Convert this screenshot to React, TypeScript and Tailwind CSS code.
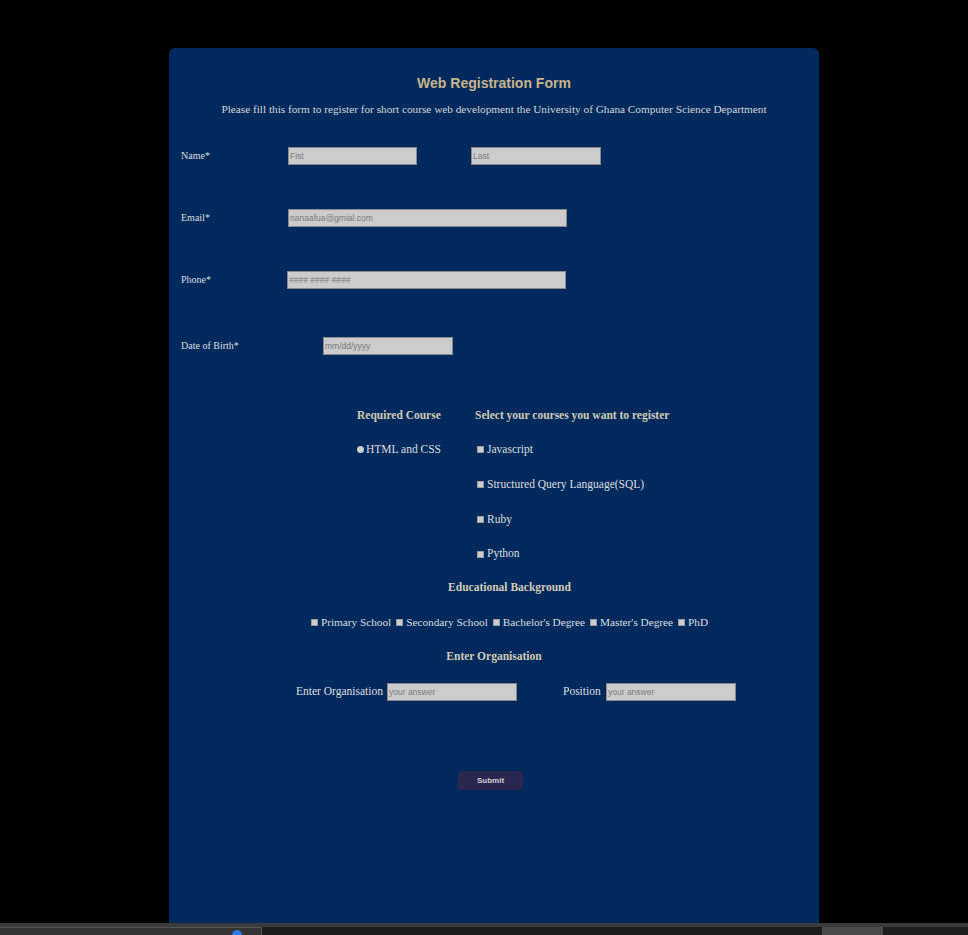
const serif = "font-['Liberation_Serif','Times_New_Roman',serif]";
const sans = "font-['Liberation_Sans',Arial,sans-serif]";

const Field = ({ placeholder, width }: { placeholder: string; width: string }) => (
  <input
    type="text"
    placeholder={placeholder}
    className={`${sans} ${width} h-[18px] border border-[#8a8a8a] bg-[#cccccc] px-[1px] text-[8.5px] text-[#333] outline-none placeholder:text-[#7a7a7a]`}
  />
);

const Box = () => (
  <span className="inline-block h-[7px] w-[7px] shrink-0 border border-[#9c9c9c] bg-[#cdcdcd]" />
);

const CheckItem = ({ label }: { label: string }) => (
  <span className="flex items-center gap-[3px]">
    <Box />
    {label}
  </span>
);

const courses = ["Javascript", "Structured Query Language(SQL)", "Ruby", "Python"];
const levels = ["Primary School", "Secondary School", "Bachelor's Degree", "Master's Degree", "PhD"];

export default function App() {
  return (
    <div className="flex h-[935px] w-full flex-col overflow-hidden bg-black">
      <div className={`${serif} ml-[169px] mt-[48px] flex h-[875px] w-[650px] flex-col rounded-t-[6px] bg-[#002a5e] text-[#dedede]`}>
        <h1 className={`${sans} mt-[25px] text-center text-[14px] font-bold text-[#c8b38b]`}>
          Web Registration Form
        </h1>
        <p className="mt-[7px] text-center text-[11.25px] text-[#d6d6d6]">
          Please fill this form to register for short course web development the University of Ghana Computer Science Department
        </p>

        <div className="mt-[29px] flex items-center pl-3 text-[10px]">
          <label className="w-[107px]">Name*</label>
          <Field placeholder="Fist" width="w-[129px]" />
          <span className="w-[54px]" />
          <Field placeholder="Last" width="w-[130px]" />
        </div>

        <div className="mt-[44px] flex items-center pl-3 text-[10px]">
          <label className="w-[107px]">Email*</label>
          <Field placeholder="nanaafua@gmial.com" width="w-[279px]" />
        </div>

        <div className="mt-[44px] flex items-center pl-3 text-[10px]">
          <label className="w-[106px]">Phone*</label>
          <Field placeholder="#### #### ####" width="w-[279px]" />
        </div>

        <div className="mt-[48px] flex items-center pl-3 text-[10px]">
          <label className="w-[142px]">Date of Birth*</label>
          <Field placeholder="mm/dd/yyyy" width="w-[130px]" />
        </div>

        <div className="mt-[52px] flex pl-[188px] text-[11.5px]">
          <div className="flex w-[118px] flex-col">
            <h3 className="font-bold text-[#d2cbb5]">Required Course</h3>
            <span className="mt-[17px] flex items-center gap-[2px]">
              <span className="inline-block h-[7px] w-[7px] rounded-full bg-[#d0d0d0]" />
              HTML and CSS
            </span>
          </div>
          <div className="flex flex-col">
            <h3 className="font-bold text-[#d2cbb5]">Select your courses you want to register</h3>
            <div className="mt-[17px] flex flex-col gap-[17.5px] pl-[2px]">
              {courses.map((c) => (
                <CheckItem key={c} label={c} />
              ))}
            </div>
          </div>
        </div>

        <h3 className="mt-[16px] pl-[31px] text-center text-[11.5px] font-bold text-[#d2cbb5]">
          Educational Background
        </h3>
        <div className="mt-[18px] flex justify-center gap-[5px] pl-[31px] text-[11.25px]">
          {levels.map((l) => (
            <CheckItem key={l} label={l} />
          ))}
        </div>

        <h3 className="mt-[17px] text-center text-[11.5px] font-bold text-[#d2cbb5]">
          Enter Organisation
        </h3>
        <div className="mt-[18px] flex items-center pl-[127px] text-[11.5px]">
          <label className="w-[91px]">Enter Organisation</label>
          <Field placeholder="your answer" width="w-[130px]" />
          <label className="ml-[46px] w-[43px]">Position</label>
          <Field placeholder="your answer" width="w-[130px]" />
        </div>

        <button
          className={`${sans} ml-[289px] mt-[70px] h-[19px] w-[65px] rounded-[3px] bg-[#2a2650] text-[8px] font-bold text-[#cfcfcf]`}
        >
          Submit
        </button>
      </div>

      <div className="flex h-[12px] flex-col bg-[#3a3a3a]">
        <div className="mt-[4px] flex h-[8px]">
          <div className="relative w-[262px] overflow-hidden border-r border-t border-[#555] bg-[#333]">
            <span className="absolute left-[232px] top-[2px] h-[10px] w-[10px] rounded-full bg-[#2a7be4]" />
          </div>
          <div className="w-[560px] bg-[#1c1c1c]" />
          <div className="w-[61px] bg-[#4a4a4a]" />
          <div className="flex-1 bg-[#1f1f1f]" />
        </div>
      </div>
    </div>
  );
}
